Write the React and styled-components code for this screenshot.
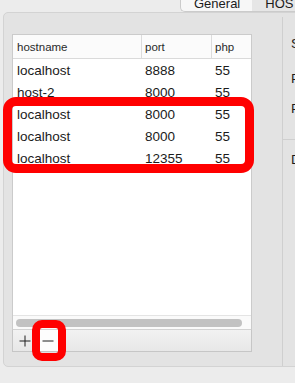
import styled, { createGlobalStyle } from 'styled-components';

const hosts = [
  { name: 'localhost', port: '8888', php: '55' },
  { name: 'host-2', port: '8000', php: '55' },
  { name: 'localhost', port: '8000', php: '55' },
  { name: 'localhost', port: '8000', php: '55' },
  { name: 'localhost', port: '12355', php: '55' },
];

export default function App() {
  return (
    <Page>
      <GlobalStyle />
      <TabBar>
        <Tab active>General</Tab>
        <Tab>HOST</Tab>
      </TabBar>
      <Panel>
        <LeftColumn>
          <Table>
            <HeaderRow>
              <HeaderCell>hostname</HeaderCell>
              <HeaderCell divider>port</HeaderCell>
              <HeaderCell divider>php</HeaderCell>
            </HeaderRow>
            <Body>
              {hosts.map((h, i) => (
                <Row key={i}>
                  <Cell>{h.name}</Cell>
                  <Cell>{h.port}</Cell>
                  <Cell>{h.php}</Cell>
                </Row>
              ))}
            </Body>
            <ScrollTrack>
              <ScrollThumb />
            </ScrollTrack>
          </Table>
          <ButtonBar>
            <BarButton>
              <svg width="12" height="12" viewBox="0 0 12 12">
                <path d="M6 0.5V11.5M0.5 6H11.5" stroke="#1e1e1e" strokeWidth="1" />
              </svg>
            </BarButton>
            <BarButton highlighted>
              <svg width="12" height="12" viewBox="0 0 12 12">
                <path d="M0.5 6H11.5" stroke="#1e1e1e" strokeWidth="1" />
              </svg>
            </BarButton>
          </ButtonBar>
        </LeftColumn>
        <RightColumn>
          <FieldLabel top={19}>S</FieldLabel>
          <FieldLabel top={19}>P</FieldLabel>
          <FieldLabel top={14}>P</FieldLabel>
          <Divider />
          <FieldLabel top={12}>D</FieldLabel>
        </RightColumn>
      </Panel>
      <Mark left={3} top={97} width={251} height={76} radius={13} />
      <Mark left={32} top={320} width={34} height={41} radius={10} thickness={8} />
    </Page>
  );
}

const GlobalStyle = createGlobalStyle`
  html, body {
    margin: 0;
    padding: 0;
    background: #ececec;
  }
`;

const Page = styled.div`
  position: relative;
  width: 295px;
  height: 383px;
  overflow: hidden;
  background: #ececec;
  font-family: "Liberation Sans", Arial, sans-serif;
  color: #1b1b1b;
`;

const TabBar = styled.div`
  display: flex;
  height: 12px;
  padding-left: 180px;
  position: relative;
  z-index: 1;
`;

const Tab = styled.div`
  margin-top: -4px;
  height: 15px;
  line-height: 15px;
  padding: 0 12px 0 13px;
  font-size: 13px;
  background: ${p => (p.active ? '#f7f7f7' : '#e6e6e6')};
  border-bottom: 1px solid #cbcbcb;
  border-left: ${p => (p.active ? '1px solid #cbcbcb' : 'none')};
  border-radius: ${p => (p.active ? '0 0 0 5px' : '0')};
  white-space: nowrap;
`;

const Panel = styled.div`
  margin-left: 3px;
  width: 320px;
  height: 355px;
  box-sizing: border-box;
  background: #e3e3e3;
  border: 1px solid #d3d3d3;
  border-radius: 5px 0 0 5px;
  padding: 4px 0 0 8px;
  display: grid;
  grid-template-columns: 240px 1fr;
  column-gap: 30px;
  align-items: start;
`;

const LeftColumn = styled.div`
  padding-top: 17px;
  display: flex;
  flex-direction: column;
`;

const Table = styled.div`
  border: 1px solid #cbcbcb;
  border-bottom: none;
  background: #fff;
  display: flex;
  flex-direction: column;
`;

const HeaderRow = styled.div`
  display: grid;
  grid-template-columns: 128px 70px 1fr;
  height: 23px;
  background: #fbfbfb;
  border-bottom: 1px solid #dadada;
`;

const HeaderCell = styled.div`
  display: flex;
  align-items: center;
  padding-left: ${p => (p.divider ? '3px' : '4px')};
  font-size: 11.5px;
  color: #2a2a2a;
  border-left: ${p => (p.divider ? '1px solid #dcdcdc' : 'none')};
`;

const Body = styled.div`
  height: 256px;
  display: flex;
  flex-direction: column;
`;

const Row = styled.div`
  display: grid;
  grid-template-columns: 128px 70px 1fr;
  height: 22px;
  align-items: center;
`;

const Cell = styled.div`
  padding-left: 4px;
  font-size: 13.5px;
  white-space: nowrap;
`;

const ScrollTrack = styled.div`
  height: 15px;
  box-sizing: border-box;
  background: #fafafa;
  border-top: 1px solid #e4e4e4;
  border-bottom: 1px solid #d2d2d2;
  padding: 3px 9px 0 3px;
`;

const ScrollThumb = styled.div`
  height: 8px;
  border-radius: 4px;
  background: #c2c2c2;
`;

const ButtonBar = styled.div`
  height: 22px;
  box-sizing: border-box;
  border: 1px solid #c6c6c6;
  border-top: none;
  background: linear-gradient(#f2f2f2, #e7e7e7);
  display: flex;
`;

const BarButton = styled.div`
  width: 23px;
  display: flex;
  align-items: center;
  justify-content: center;
  background: ${p => (p.highlighted ? '#fdfdfd' : 'transparent')};
`;

const RightColumn = styled.div`
  height: 349px;
  border-left: 1px solid #cfcfcf;
  display: flex;
  flex-direction: column;
`;

const FieldLabel = styled.div`
  margin-top: ${p => p.top}px;
  padding-left: 8px;
  font-size: 13.5px;
  line-height: 16px;
`;

const Divider = styled.div`
  margin-top: 22px;
  height: 1px;
  background: #cfcfcf;
`;

const Mark = styled.div`
  position: absolute;
  left: ${p => p.left}px;
  top: ${p => p.top}px;
  width: ${p => p.width}px;
  height: ${p => p.height}px;
  box-sizing: border-box;
  border: ${p => p.thickness || 9}px solid #ff0000;
  border-radius: ${p => p.radius}px;
  pointer-events: none;
`;
